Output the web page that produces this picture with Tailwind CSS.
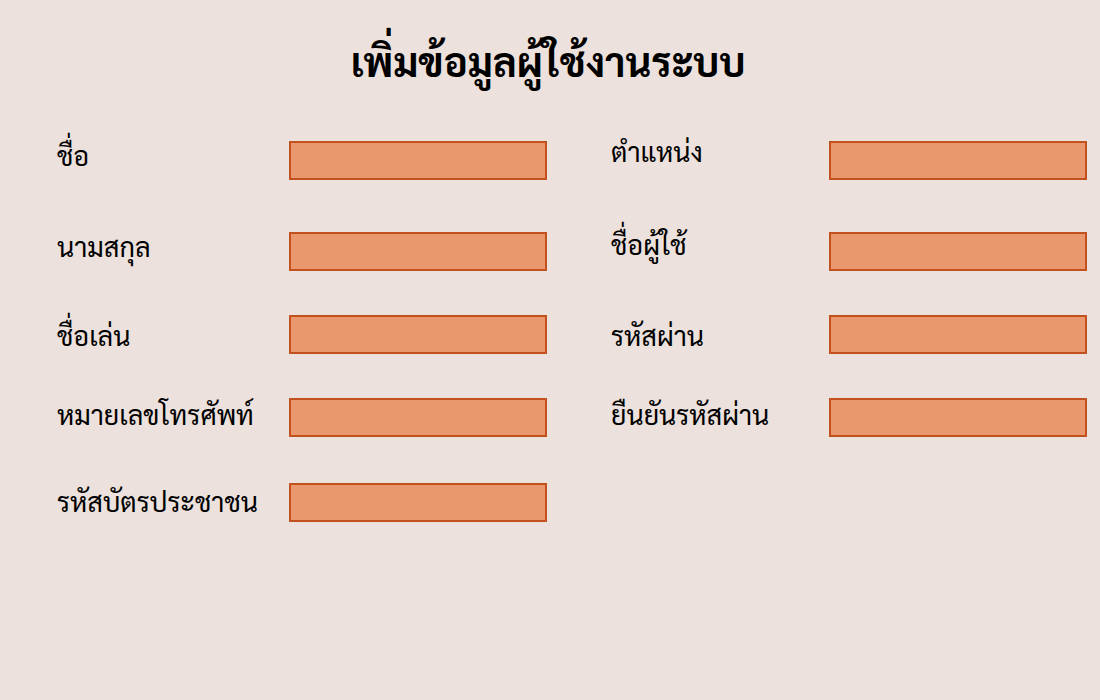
<!DOCTYPE html>
<html lang="th">
<head>
<meta charset="utf-8">
<meta name="viewport" content="width=device-width, initial-scale=1">
<title>เพิ่มข้อมูลผู้ใช้งานระบบ</title>
<script src="https://cdn.jsdelivr.net/npm/@tailwindcss/browser@4"></script>
</head>
<body class="min-h-screen bg-[#ece1dc] font-['Sarabun','Noto_Sans_Thai_Looped','Noto_Sans',sans-serif] text-black">
<main class="pt-6">
  <h1 class="pr-1 text-center text-[40px] leading-[72px] font-bold">เพิ่มข้อมูลผู้ใช้งานระบบ</h1>
  <form class="mt-[45px] grid grid-cols-[490fr_476fr] gap-x-16 pr-[13px] pl-[57px] text-[27px]">
    <div class="flex flex-col">
      <div class="mb-[52px] flex items-start justify-between"><label for="first-name" class="leading-7">ชื่อ</label><input id="first-name" type="text" class="h-[39px] w-[258px] border-2 border-[#c3511d] bg-[#e9986d]"></div>
      <div class="mb-11 flex items-start justify-between"><label for="last-name" class="leading-7">นามสกุล</label><input id="last-name" type="text" class="h-[39px] w-[258px] border-2 border-[#c3511d] bg-[#e9986d]"></div>
      <div class="mb-11 flex items-start justify-between"><label for="nickname" class="leading-[39px]">ชื่อเล่น</label><input id="nickname" type="text" class="h-[39px] w-[258px] border-2 border-[#c3511d] bg-[#e9986d]"></div>
      <div class="mb-[46px] flex items-start justify-between"><label for="phone" class="leading-8">หมายเลขโทรศัพท์</label><input id="phone" type="tel" class="h-[39px] w-[258px] border-2 border-[#c3511d] bg-[#e9986d]"></div>
      <div class="flex items-start justify-between"><label for="citizen-id" class="leading-9">รหัสบัตรประชาชน</label><input id="citizen-id" type="text" class="h-[39px] w-[258px] border-2 border-[#c3511d] bg-[#e9986d]"></div>
    </div>
    <div class="flex flex-col">
      <div class="mb-[52px] flex items-start justify-between"><label for="position" class="leading-5">ตำแหน่ง</label><input id="position" type="text" class="h-[39px] w-[258px] border-2 border-[#c3511d] bg-[#e9986d]"></div>
      <div class="mb-11 flex items-start justify-between"><label for="username" class="leading-6">ชื่อผู้ใช้</label><input id="username" type="text" class="h-[39px] w-[258px] border-2 border-[#c3511d] bg-[#e9986d]"></div>
      <div class="mb-11 flex items-start justify-between"><label for="password" class="leading-[39px]">รหัสผ่าน</label><input id="password" type="password" class="h-[39px] w-[258px] border-2 border-[#c3511d] bg-[#e9986d]"></div>
      <div class="flex items-start justify-between"><label for="confirm-password" class="leading-8">ยืนยันรหัสผ่าน</label><input id="confirm-password" type="password" class="h-[39px] w-[258px] border-2 border-[#c3511d] bg-[#e9986d]"></div>
    </div>
  </form>
</main>
</body>
</html>
